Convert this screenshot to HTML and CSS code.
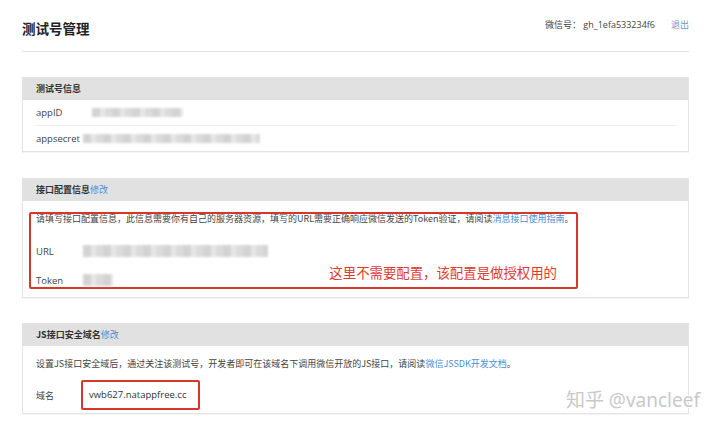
FILE: index.html
```html
<!DOCTYPE html>
<html lang="zh-CN">
<head>
  <meta charset="UTF-8" />
  <title>测试号管理</title>
  <link rel="stylesheet" href="styles.css" />
</head>
<body>
  <div class="page">
    <!-- 顶部 -->
    <div class="top">
      <h1 class="title">测试号管理</h1>
      <div class="meta">微信号： gh_1efa533234f6<a href="#" class="logout">退出</a></div>
    </div>

    <!-- 测试号信息 -->
    <div class="panel">
      <div class="panel-head">测试号信息</div>
      <div class="panel-body info">
        <div class="row line">
          <span class="label">appID</span>
          <span class="blur blur-id"></span>
        </div>
        <div class="row">
          <span class="label">appsecret</span>
          <span class="blur blur-secret"></span>
        </div>
      </div>
    </div>

    <!-- 接口配置信息 -->
    <div class="panel second">
      <div class="panel-head">接口配置信息<a href="#">修改</a></div>
      <div class="panel-body config">
        <div class="mark">
          <p class="desc">请填写接口配置信息，此信息需要你有自己的服务器资源，填写的URL需要正确响应微信发送的Token验证，请阅读<a href="#">消息接口使用指南</a>。</p>
          <div class="row small url">
            <span class="label wide">URL</span>
            <span class="blur blur-url"></span>
          </div>
          <div class="row small token">
            <span class="label wide">Token</span>
            <span class="blur blur-token"></span>
          </div>
          <div class="note">这里不需要配置，该配置是做授权用的</div>
        </div>
      </div>
    </div>

    <!-- JS接口安全域名 -->
    <div class="panel third">
      <div class="panel-head">JS接口安全域名<a href="#">修改</a></div>
      <div class="panel-body js">
        <p class="desc">设置JS接口安全域后，通过关注该测试号，开发者即可在该域名下调用微信开放的JS接口，请阅读<a href="#">微信JSSDK开发文档</a>。</p>
        <div class="row domain">
          <span class="label">域名</span>
          <span class="domain-box">vwb627.natappfree.cc</span>
        </div>
      </div>
    </div>
  </div>

  <div class="watermark">知乎 @vancleef</div>
</body>
</html>
```

FILE: styles.css
```css
/* 基本設定 */
body {
  margin: 0;
  font-family: "Open Sans", "Noto Sans CJK SC", sans-serif;
  color: #333;
  background: #fff;
  position: relative;
  height: 432px;
  overflow: hidden;
}

a {
  color: #4a8fd6;
  text-decoration: none;
}

.page {
  padding: 0 31px 0 22px;
}

/* 顶部 */
.top {
  display: flex;
  justify-content: space-between;
  align-items: flex-start;
  height: 51px;
  border-bottom: 1px solid #e2e2e2;
}

.title {
  margin: 20px 0 0;
  font-size: 13.5px;
  line-height: 16px;
  font-weight: 700;
  color: #222;
  font-family: "Noto Sans CJK SC", sans-serif;
}

.meta {
  margin-top: 19px;
  font-size: 9px;
  line-height: 12px;
  color: #444;
}

.logout {
  margin-left: 16px;
  color: #6a98d0;
}

/* 面板 */
.panel {
  margin-top: 25px;
  border: 1px solid #e3e3e3;
  box-shadow: 0 1px 1px rgba(0, 0, 0, 0.04);
}

.panel.second {
  margin-top: 26px;
}

.panel.third {
  margin-top: 25px;
}

.panel-head {
  height: 22px;
  line-height: 22px;
  padding-left: 13px;
  background: #e1e1e1;
  font-size: 9px;
  font-weight: 700;
  color: #333;
  font-family: "Noto Sans CJK SC", sans-serif;
}

.panel-head a {
  font-weight: 400;
}

.panel-body {
  padding: 0 12px 0 13px;
}

.row {
  display: flex;
  align-items: center;
  font-size: 9.5px;
  color: #444;
}

.info .row {
  height: 25px;
}

.info .row.line {
  border-bottom: 1px solid #ececec;
}

.label {
  width: 47px;
  flex-shrink: 0;
}

/* 打码区域 */
.blur {
  display: block;
  height: 9px;
  background:
    repeating-linear-gradient(90deg, #cfcfcf 0 8px, #e4e4e4 8px 13px, #d8d8d8 13px 20px);
  filter: blur(1.3px);
  opacity: 0.9;
}

.blur-id {
  width: 91px;
  margin-left: 9px;
}

.blur-secret {
  width: 177px;
}

.blur-url {
  width: 185px;
  height: 12px;
}

.blur-token {
  width: 30px;
  height: 12px;
}

/* 接口配置信息 */
.config {
  padding: 11px 110px 8px 6px;
}

.mark {
  position: relative;
  height: 77px;
  box-sizing: border-box;
  border: 2px solid #d8352d;
  border-radius: 2px;
  padding: 0 5px;
}

.desc {
  margin: 0;
  font-size: 9px;
  line-height: 10px;
  color: #444;
  white-space: nowrap;
  font-family: "Noto Sans CJK SC", sans-serif;
}

.row.small {
  height: 14px;
}

.url {
  margin-top: 20px;
}

.token {
  margin-top: 15px;
}

.note {
  position: absolute;
  right: 19px;
  top: 50px;
  font-size: 13.4px;
  line-height: 16px;
  color: #e2392f;
  font-family: "Noto Sans CJK SC", sans-serif;
}

/* JS接口安全域名 */
.js {
  padding: 12px 12px 3px 13px;
}

.js .desc {
  line-height: 12px;
}

.domain {
  margin-top: 10px;
}

.domain .label {
  width: 45px;
  font-family: "Noto Sans CJK SC", sans-serif;
  font-size: 9px;
}

.domain-box {
  display: block;
  width: 119px;
  height: 30px;
  box-sizing: border-box;
  line-height: 26px;
  border: 2px solid #d8352d;
  border-radius: 2px;
  padding-left: 6px;
  font-size: 9.5px;
  color: #333;
}

/* 水印 */
.watermark {
  position: absolute;
  right: 20px;
  top: 387px;
  font-size: 19px;
  line-height: 26px;
  color: #c9c9c9;
  font-family: "Noto Sans", "Noto Sans CJK SC", sans-serif;
  text-shadow: -1px 0 #fff, 1px 0 #fff, 0 -1px #fff, 0 1px #fff;
}
```
